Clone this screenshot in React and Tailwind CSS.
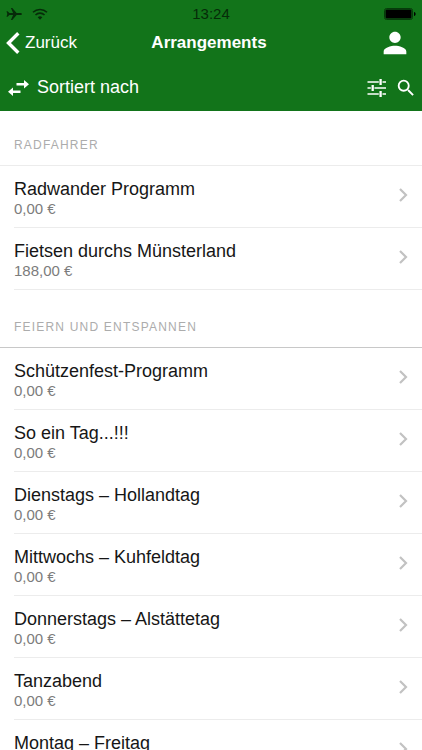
import { MdPerson, MdSearch } from 'react-icons/md';

const groups = [
    {
        title: 'Radfahrer',
        line: 'border-[#ececec]',
        items: [
            { name: 'Radwander Programm', price: '0,00 €' },
            { name: 'Fietsen durchs Münsterland', price: '188,00 €' },
        ],
    },
    {
        title: 'Feiern und Entspannen',
        line: 'border-[#c8c8c8]',
        items: [
            { name: 'Schützenfest-Programm', price: '0,00 €' },
            { name: 'So ein Tag...!!!', price: '0,00 €' },
            { name: 'Dienstags – Hollandtag', price: '0,00 €' },
            { name: 'Mittwochs – Kuhfeldtag', price: '0,00 €' },
            { name: 'Donnerstags – Alstättetag', price: '0,00 €' },
            { name: 'Tanzabend', price: '0,00 €' },
            { name: 'Montag – Freitag', price: '0,00 €' },
        ],
    },
];

function StatusBar() {
    return (
        <div className="grid grid-cols-3 items-center h-[22px] pt-[6px] px-[6px] text-[#062b09]">
            <div className="flex items-center gap-[10px]">
                <svg width="16" height="12" viewBox="0 0 16 12" fill="currentColor" aria-hidden="true">
                    <path d="M16 6c0-.7-.8-1.1-1.8-1.1h-3.6L6.3 0H4.9l2.2 4.9H3.4L1.6 3.2H.5L1.3 6 .5 8.8h1.1l1.8-1.7h3.7L4.9 12h1.4l4.3-4.9h3.6c1 0 1.800-.4 1.800-1.100z" />
                </svg>
                <svg width="16" height="12" viewBox="0 0 16 12" fill="none" stroke="currentColor" strokeWidth="1.6" aria-hidden="true">
                    <path d="M1 4.300a10 10 0 0 1 14 0" />
                    <path d="M3.500 7a6.400 6.400 0 0 1 9 0" />
                    <path d="M8 11.700 5.700 9.300a3.300 3.300 0 0 1 4.600 0z" fill="currentColor" stroke="none" />
                </svg>
            </div>
            <span className="text-center text-[15px] leading-4">13:24</span>
            <svg className="justify-self-end" width="32" height="12" viewBox="0 0 32 12" fill="none" aria-hidden="true">
                <rect x="0.500" y="0.500" width="28" height="11" rx="2" stroke="#063c0a" />
                <rect x="1.500" y="1.500" width="26" height="9" rx="1" fill="#000" />
                <path d="M30 4c1.200.3 1.600 1.100 1.600 2S31.200 7.700 30 8z" fill="#000" />
            </svg>
        </div>
    );
}

function NavBar() {
    return (
        <nav className="grid grid-cols-[1fr_auto_1fr] items-center h-[42px] pl-[6px] pr-[10px] text-[17px] text-white">
            <a href="#back" className="flex items-center gap-[5px]">
                <svg width="14" height="22" viewBox="0 0 14 22" fill="none" stroke="currentColor" strokeWidth="3.4" aria-hidden="true">
                    <path d="M12.300 1.200 2.500 11l9.800 9.800" />
                </svg>
                Zurück
            </a>
            <h1 className="font-bold">Arrangements</h1>
            <button type="button" aria-label="Profil" className="justify-self-end">
                <MdPerson size={34} />
            </button>
        </nav>
    );
}

function Toolbar() {
    return (
        <div className="flex items-center justify-between h-[47px] pl-2 pr-[5px] text-white">
            <button type="button" className="flex items-center gap-2 text-[18px]">
                <svg width="21" height="16" viewBox="0 0 21 16" fill="currentColor" aria-hidden="true">
                    <path d="M8.500 3h7.500V0l5 4.200-5 4.200v-3H8.500z" />
                    <path d="M12.500 10.600H5v-3l-5 4.200L5 16v-3h7.500z" />
                </svg>
                Sortiert nach
            </button>
            <div className="flex items-center gap-[9px]">
                <button type="button" aria-label="Filter">
                    <svg width="19" height="18" viewBox="0 0 19 18" fill="none" stroke="currentColor" aria-hidden="true">
                        <path d="M.5 3h11.300M15.500 3H19M.5 9h3.300M7.500 9H19M.5 15h11.300M15.500 15H19" strokeWidth="1.500" />
                        <path d="M13.600 0v6M5.700 6v6M13.600 12v6" strokeWidth="2.300" />
                    </svg>
                </button>
                <button type="button" aria-label="Suchen">
                    <MdSearch size={22} />
                </button>
            </div>
        </div>
    );
}

function Row({ name, price }) {
    return (
        <li className="pl-[14px]">
            <a href="#detail" className="flex items-center justify-between h-[62px] pr-[14px] pb-[3px] border-b border-[#ececec]">
                <div className="pt-[5px]">
                    <h3 className="text-[18px] leading-[22px] text-[#161616]">{name}</h3>
                    <p className="text-[15px] leading-[18px] text-[#7c7c7c]">{price}</p>
                </div>
                <svg width="9" height="14" viewBox="0 0 9 14" fill="none" stroke="#c2c2c2" strokeWidth="2.2" aria-hidden="true">
                    <path d="m1 1 6 6-6 6" />
                </svg>
            </a>
        </li>
    );
}

export default function App() {
    return (
        <div className="flex flex-col h-screen bg-white font-['Liberation_Sans',Arial,sans-serif]">
            <header className="bg-[#12741a]">
                <StatusBar />
                <NavBar />
                <Toolbar />
            </header>

            <main className="flex flex-col flex-1 gap-[3px] overflow-y-auto [scrollbar-width:none]">
                {groups.map((group) => (
                    <section key={group.title}>
                        <h2 className={`pt-6 pb-[10px] pl-[14px] text-[12px] leading-5 uppercase tracking-widest text-[#acacac] border-b ${group.line}`}>
                            {group.title}
                        </h2>
                        <ul>
                            {group.items.map((item) => (
                                <Row key={item.name} name={item.name} price={item.price} />
                            ))}
                        </ul>
                    </section>
                ))}
            </main>
        </div>
    );
}
